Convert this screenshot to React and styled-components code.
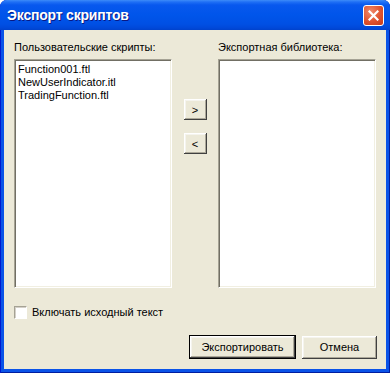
import React, { useState } from "react";
import styled, { createGlobalStyle } from "styled-components";

const GlobalStyle = createGlobalStyle`
  html, body {
    margin: 0;
    padding: 0;
    background: #ffffff;
  }
  body {
    font-family: "Liberation Sans", Arial, sans-serif;
    font-size: 11px;
  }
`;

const Window = styled.div`
  width: 390px;
  height: 373px;
  box-sizing: border-box;
  display: flex;
  flex-direction: column;
  background: #0a53e8;
  border-radius: 7px 7px 0 0;
  box-shadow: inset 1px 0 #0019cf, inset -1px 0 #001ea0, inset 0 -1px #001ea0;
  overflow: hidden;
`;

const TitleBar = styled.div`
  height: 30px;
  flex-shrink: 0;
  display: flex;
  align-items: center;
  justify-content: space-between;
  padding: 0 6px 0 7px;
  background: linear-gradient(
    to bottom,
    #3d8cf8 0px,
    #1f6ff5 2px,
    #0858ee 5px,
    #0055ea 15px,
    #0050e4 24px,
    #0048d9 28px,
    #0042cc 30px
  );
`;

const Title = styled.span`
  color: #ffffff;
  font-family: "Liberation Sans", Arial, sans-serif;
  font-weight: bold;
  font-size: 14px;
  text-shadow: 1px 1px #0a1883;
  letter-spacing: -0.2px;
`;

const CloseButton = styled.button`
  width: 21px;
  height: 21px;
  padding: 0;
  margin-top: 1px;
  display: flex;
  align-items: center;
  justify-content: center;
  border: 1px solid #ffffff;
  border-radius: 3px;
  background: radial-gradient(circle at 35% 30%, #f08a6c 0%, #e0532f 55%, #c53a18 100%);
  cursor: pointer;
`;

const Body = styled.div`
  flex: 1;
  margin: 0 4px 4px 4px;
  background: #ece9d8;
  padding: 10px 10px 0 10px;
  display: flex;
  flex-direction: column;
`;

const Lists = styled.div`
  display: grid;
  grid-template-columns: 158px 46px 158px;
  grid-template-rows: 19px 229px;
`;

const Label = styled.div`
  color: #000000;
  font-size: 11px;
  line-height: 13px;
  padding-top: 1px;
  white-space: nowrap;
  grid-column: ${(p) => p.col};
`;

const ListBox = styled.div`
  background: #ffffff;
  box-sizing: border-box;
  border: 1px solid;
  border-color: #a5a294 #ffffff #ffffff #a5a294;
  box-shadow: inset 1px 1px #716f64, inset -1px -1px #f1efe2;
  padding: 3px 2px;
  grid-column: ${(p) => p.col};
`;

const Item = styled.div`
  color: #000000;
  font-size: 11px;
  line-height: 13px;
  padding-left: 1px;
  white-space: nowrap;
`;

const Middle = styled.div`
  grid-column: 2;
  grid-row: 2;
  display: flex;
  flex-direction: column;
  align-items: center;
  padding-top: 40px;
  gap: 13px;
`;

const ClassicButton = styled.button`
  width: ${(p) => p.w}px;
  height: ${(p) => p.h}px;
  box-sizing: border-box;
  padding: 0;
  background: #ece9d8;
  color: #000000;
  font-family: "Liberation Sans", Arial, sans-serif;
  font-size: 11px;
  border: ${(p) => (p.isDefault ? "1px solid #000000" : "none")};
  box-shadow: inset -1px -1px #404040, inset 1px 1px #ffffff,
    inset -2px -2px #aca899, inset 2px 2px #f5f4ee;
  cursor: pointer;
`;

const CheckRow = styled.label`
  display: flex;
  align-items: center;
  gap: 5px;
  margin-top: 18px;
  height: 13px;
  cursor: pointer;
`;

const CheckBox = styled.span`
  width: 13px;
  height: 13px;
  box-sizing: border-box;
  background: #ffffff;
  border: 1px solid;
  border-color: #a5a294 #ffffff #ffffff #a5a294;
  box-shadow: inset 1px 1px #d4d0c8;
  display: flex;
  align-items: center;
  justify-content: center;
`;

const CheckText = styled.span`
  color: #000000;
  font-size: 11px;
  line-height: 13px;
`;

const Footer = styled.div`
  display: flex;
  justify-content: flex-end;
  align-items: center;
  gap: 6px;
  margin-top: 16px;
  margin-right: -1px;
`;

const scripts = ["Function001.ftl", "NewUserIndicator.itl", "TradingFunction.ftl"];

export default function App() {
  const [withSource, setWithSource] = useState(false);

  return (
    <>
      <GlobalStyle />
      <Window>
        <TitleBar>
          <Title>Экспорт скриптов</Title>
          <CloseButton aria-label="close">
            <svg width="11" height="11" viewBox="0 0 11 11">
              <path d="M1.5 1.5 L9.5 9.5 M9.5 1.5 L1.5 9.5" stroke="#ffffff" strokeWidth="2.2" strokeLinecap="square" />
            </svg>
          </CloseButton>
        </TitleBar>
        <Body>
          <Lists>
            <Label col={1}>Пользовательские скрипты:</Label>
            <Label col={3}>Экспортная библиотека:</Label>
            <ListBox col={1}>
              {scripts.map((s) => (
                <Item key={s}>{s}</Item>
              ))}
            </ListBox>
            <Middle>
              <ClassicButton w={23} h={21}>&gt;</ClassicButton>
              <ClassicButton w={23} h={21}>&lt;</ClassicButton>
            </Middle>
            <ListBox col={3} />
          </Lists>
          <CheckRow onClick={() => setWithSource(!withSource)}>
            <CheckBox>
              {withSource && (
                <svg width="7" height="7" viewBox="0 0 7 7">
                  <path d="M0 3 L2.5 5.5 L7 0.5" stroke="#21a121" strokeWidth="1.6" fill="none" />
                </svg>
              )}
            </CheckBox>
            <CheckText>Включать исходный текст</CheckText>
          </CheckRow>
          <Footer>
            <ClassicButton w={107} h={24} isDefault>Экспортировать</ClassicButton>
            <ClassicButton w={75} h={23}>Отмена</ClassicButton>
          </Footer>
        </Body>
      </Window>
    </>
  );
}
